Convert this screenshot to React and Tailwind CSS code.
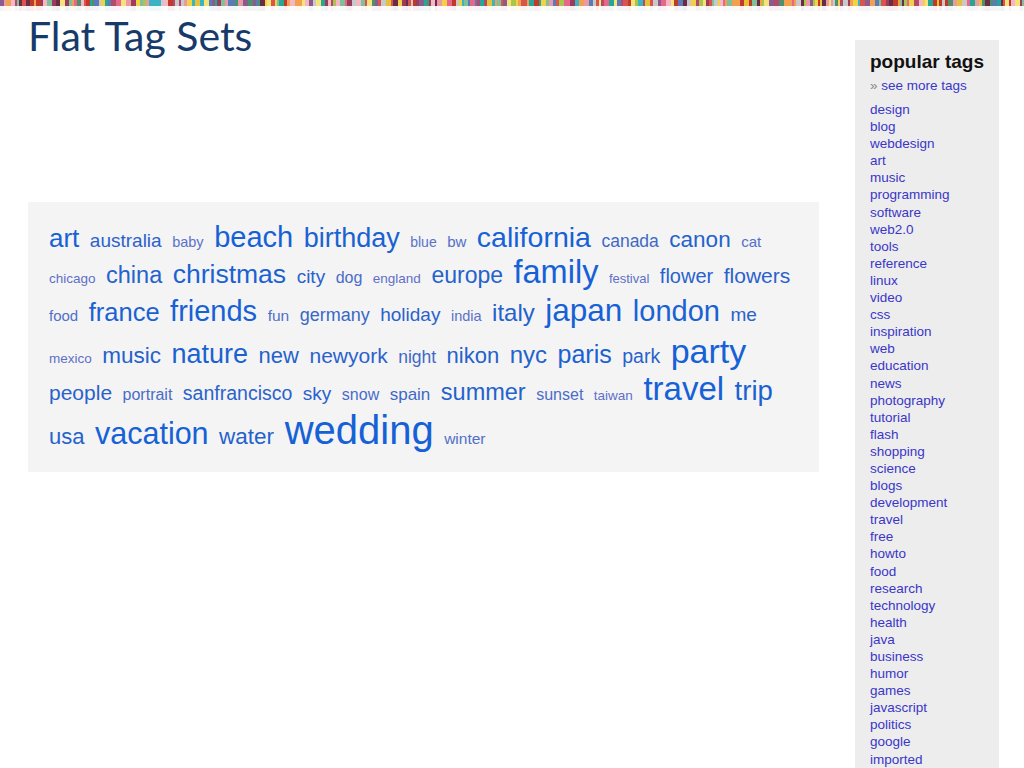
import React from 'react';

// colour bars along the top edge of the slide
const STRIPE_COLORS = [
  '#e99aa6', '#f3d146', '#27a596', '#6a2b47', '#d9534f', '#a9c54b', '#5a7bb6', '#f0a04f',
  '#c9c9c9', '#e6678a', '#8b5b8e', '#c0392b', '#f6e27a', '#3bb3c3', '#9b3d5a', '#f2b8c6',
  '#4e8f6d', '#e3c13a', '#b14a6b', '#7fbf9a',
];

const buildStripes = () => {
  let seed = 17;
  const rnd = () => {
    seed = (seed * 1103515245 + 12345) % 2147483648;
    return seed / 2147483648;
  };
  const out = [];
  let x = 0;
  while (x < 1024) {
    const w = 2 + Math.floor(rnd() * 4);
    out.push({ x, w, fill: STRIPE_COLORS[Math.floor(rnd() * STRIPE_COLORS.length)] });
    x += w;
  }
  return out;
};

const stripes = buildStripes();

const Stripes = () => (
  <svg width="1024" height="12" className="block shrink-0">
    {stripes.map((s, i) => (
      <g key={i}>
        <rect x={s.x} y="0" width={s.w} height="6" fill={s.fill} />
        <rect x={s.x} y="6" width={s.w} height="5" fill={s.fill} opacity="0.08" />
      </g>
    ))}
  </svg>
);

const rows = [
  {
    h: 'h-[33px]',
    tags: [
      { t: 'art', c: 'text-[26px] text-[#1661d6]' },
      { t: 'australia', c: 'text-[19px] text-[#2a62cc]' },
      { t: 'baby', c: 'text-[14.5px] text-[#5a72c8]' },
      { t: 'beach', c: 'text-[29px] text-[#1661d6]' },
      { t: 'birthday', c: 'text-[27px] text-[#1a62d2]' },
      { t: 'blue', c: 'text-[14px] text-[#5a72c8]' },
      { t: 'bw', c: 'text-[15px] text-[#5070c8]' },
      { t: 'california', c: 'text-[28.5px] text-[#1661d6]' },
      { t: 'canada', c: 'text-[17.5px] text-[#3f69c6]' },
      { t: 'canon', c: 'text-[22.5px] text-[#2462cc]' },
      { t: 'cat', c: 'text-[15px] text-[#5070c8]' },
    ],
  },
  {
    h: 'h-[39px]',
    tags: [
      { t: 'chicago', c: 'text-[13.5px] text-[#5e70c8]' },
      { t: 'china', c: 'text-[23.5px] text-[#2462cc]' },
      { t: 'christmas', c: 'text-[26.5px] text-[#1a62d2]' },
      { t: 'city', c: 'text-[19px] text-[#2a62cc]' },
      { t: 'dog', c: 'text-[16px] text-[#4a6cc8]' },
      { t: 'england', c: 'text-[13.5px] text-[#5e70c8]' },
      { t: 'europe', c: 'text-[23px] text-[#2462cc]' },
      { t: 'family', c: 'text-[32.5px] text-[#1661d6]' },
      { t: 'festival', c: 'text-[13px] text-[#5e70c8]' },
      { t: 'flower', c: 'text-[20px] text-[#2a62cc]' },
      { t: 'flowers', c: 'text-[21px] text-[#2a62cc]' },
    ],
  },
  {
    h: 'h-[39px]',
    tags: [
      { t: 'food', c: 'text-[15px] text-[#5070c8]' },
      { t: 'france', c: 'text-[25.5px] text-[#1a62d2]' },
      { t: 'friends', c: 'text-[29px] text-[#1661d6]' },
      { t: 'fun', c: 'text-[15.5px] text-[#5070c8]' },
      { t: 'germany', c: 'text-[18px] text-[#3868c6]' },
      { t: 'holiday', c: 'text-[19px] text-[#2a62cc]' },
      { t: 'india', c: 'text-[14.5px] text-[#5a72c8]' },
      { t: 'italy', c: 'text-[24px] text-[#2462cc]' },
      { t: 'japan', c: 'text-[31.5px] text-[#1661d6]' },
      { t: 'london', c: 'text-[29px] text-[#1a62d2]' },
      { t: 'me', c: 'text-[19px] text-[#2a62cc]' },
    ],
  },
  {
    h: 'h-[38px]',
    tags: [
      { t: 'mexico', c: 'text-[13.5px] text-[#5e70c8]' },
      { t: 'music', c: 'text-[22.5px] text-[#2462cc]' },
      { t: 'nature', c: 'text-[27px] text-[#1a62d2]' },
      { t: 'new', c: 'text-[22px] text-[#2462cc]' },
      { t: 'newyork', c: 'text-[21px] text-[#2a62cc]' },
      { t: 'night', c: 'text-[17.5px] text-[#3f69c6]' },
      { t: 'nikon', c: 'text-[22px] text-[#2462cc]' },
      { t: 'nyc', c: 'text-[24px] text-[#2462cc]' },
      { t: 'paris', c: 'text-[25px] text-[#1a62d2]' },
      { t: 'park', c: 'text-[19.5px] text-[#2a62cc]' },
      { t: 'party', c: 'text-[34px] text-[#1661d6]' },
    ],
  },
  {
    h: 'h-[38px]',
    tags: [
      { t: 'people', c: 'text-[21px] text-[#2a62cc]' },
      { t: 'portrait', c: 'text-[16px] text-[#4a6cc8]' },
      { t: 'sanfrancisco', c: 'text-[19.5px] text-[#2a62cc]' },
      { t: 'sky', c: 'text-[19px] text-[#2a62cc]' },
      { t: 'snow', c: 'text-[16px] text-[#4a6cc8]' },
      { t: 'spain', c: 'text-[17px] text-[#3f69c6]' },
      { t: 'summer', c: 'text-[23.5px] text-[#2462cc]' },
      { t: 'sunset', c: 'text-[16px] text-[#4a6cc8]' },
      { t: 'taiwan', c: 'text-[13.5px] text-[#5e70c8]' },
      { t: 'travel', c: 'text-[33px] text-[#1661d6]' },
      { t: 'trip', c: 'text-[27.5px] text-[#1a62d2]' },
    ],
  },
  {
    h: 'h-[40px]',
    tags: [
      { t: 'usa', c: 'text-[22px] text-[#2462cc]' },
      { t: 'vacation', c: 'text-[30.5px] text-[#1661d6]' },
      { t: 'water', c: 'text-[22.5px] text-[#2462cc]' },
      { t: 'wedding', c: 'text-[40px] text-[#1661d6]' },
      { t: 'winter', c: 'text-[15.5px] text-[#5070c8]' },
    ],
  },
];

const popular = [
  'design', 'blog', 'webdesign', 'art', 'music', 'programming', 'software', 'web2.0', 'tools',
  'reference', 'linux', 'video', 'css', 'inspiration', 'web', 'education', 'news', 'photography',
  'tutorial', 'flash', 'shopping', 'science', 'blogs', 'development', 'travel', 'free', 'howto',
  'food', 'research', 'technology', 'health', 'java', 'business', 'humor', 'games', 'javascript',
  'politics', 'google', 'imported',
];

export default function App() {
  return (
    <div className="w-[1024px] h-[768px] overflow-hidden bg-white flex flex-col">
      <Stripes />
      <div className="flex flex-1 min-h-0">
        <main className="w-[819px] shrink-0 pl-[28px]">
          <h1 className="mt-[3px] text-[41px] leading-none text-[#173a6a] font-['Lato',sans-serif]">
            Flat Tag Sets
          </h1>
          <div className="mt-[146px] h-[270px] bg-[#f4f4f4] pt-[21px] pl-[21px] font-['Liberation_Sans',Arial,sans-serif]">
            {rows.map((row, i) => (
              <div key={i} className={`flex items-baseline gap-x-[10.5px] whitespace-nowrap leading-none ${row.h}`}>
                {row.tags.map((tag) => (
                  <a key={tag.t} className={`leading-none ${tag.c}`}>{tag.t}</a>
                ))}
              </div>
            ))}
          </div>
        </main>
        <aside className="ml-[36px] mt-[28px] w-[144px] shrink-0 bg-[#ededed] pt-[11px] pl-[15px] font-['Liberation_Sans',Arial,sans-serif]">
          <h2 className="text-[19px] leading-[22px] font-bold text-[#111]">popular tags</h2>
          <div className="mt-[4px] text-[13.5px] leading-[17px] text-[#3a36c8]">
            <span className="text-[#888]">»</span> see more tags
          </div>
          <ul className="mt-[7px] text-[13.5px] leading-[17.1px] text-[#3a36c8]">
            {popular.map((p) => (
              <li key={p}>{p}</li>
            ))}
          </ul>
        </aside>
      </div>
    </div>
  );
}
